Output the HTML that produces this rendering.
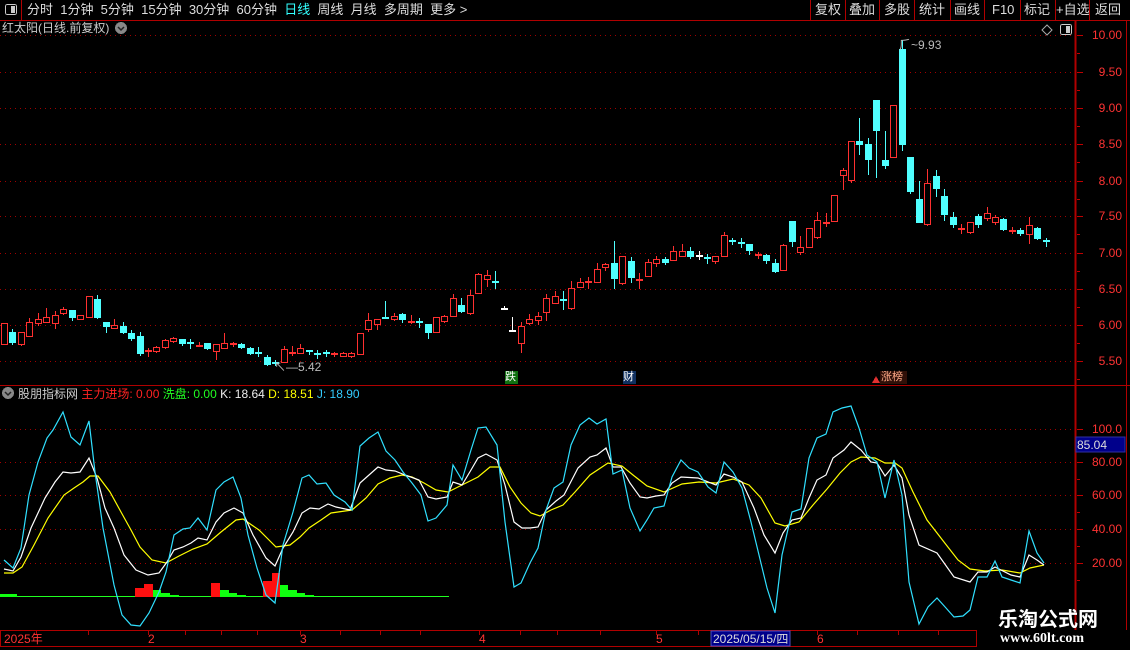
<!DOCTYPE html>
<html><head><meta charset="utf-8">
<style>
html,body{margin:0;padding:0;background:#000;width:1130px;height:650px;overflow:hidden}
body{position:relative;font-family:"Liberation Sans","Noto Sans CJK SC",sans-serif;}
.t{position:absolute;white-space:nowrap;font-size:12px;line-height:14px}
svg{position:absolute;left:0;top:0}
</style></head><body>
<svg id="s" width="1130" height="650" xmlns="http://www.w3.org/2000/svg" shape-rendering="crispEdges">
<line x1="0" y1="20.5" x2="1130" y2="20.5" stroke="#b00000"/>
<line x1="21.5" y1="0" x2="21.5" y2="20" stroke="#b00000"/>
<rect x="5.5" y="4.5" width="11" height="10" rx="2" fill="none" stroke="#ccc"/>
<rect x="11" y="6" width="4" height="7" fill="#ccc"/>
<g stroke="#b00000">
<line x1="810.5" y1="0" x2="810.5" y2="20"/><line x1="845.5" y1="0" x2="845.5" y2="20"/>
<line x1="879.5" y1="0" x2="879.5" y2="20"/><line x1="914.5" y1="0" x2="914.5" y2="20"/>
<line x1="950.5" y1="0" x2="950.5" y2="20"/><line x1="984.5" y1="0" x2="984.5" y2="20"/>
<line x1="1020.5" y1="0" x2="1020.5" y2="20"/><line x1="1055.5" y1="0" x2="1055.5" y2="20"/>
<line x1="1089.5" y1="0" x2="1089.5" y2="20"/>
</g>
<line x1="1075.5" y1="20" x2="1075.5" y2="630" stroke="#b00000" stroke-width="2"/>
<line x1="1126.5" y1="20" x2="1126.5" y2="630" stroke="#b00000" stroke-width="1"/>
<line x1="0" y1="385.5" x2="1130" y2="385.5" stroke="#b00000"/>
<g id="grid" stroke="#a00000" stroke-dasharray="1,4"></g>
<g id="ax" stroke="#c00000"></g>
<g id="c"></g>
<g id="bars"></g>
<g id="lines" fill="none" shape-rendering="auto"></g>
<rect x="0.5" y="630.5" width="976" height="16" fill="none" stroke="#b00000"/>
<g id="bt" stroke="#b00000"></g>
<rect x="711" y="631" width="79" height="15" fill="#00008b" stroke="#5050c0"/>
<rect x="1076" y="437" width="49" height="15" fill="#00008b" stroke="#3030a0"/>
<rect x="505" y="371" width="13" height="13" fill="#107010"/>
<rect x="623" y="371" width="13" height="13" fill="#103060"/>
<polygon points="872,383 876,376 880,383" fill="#e03030"/>
<rect x="880" y="371" width="27" height="13" fill="#301008"/>
<polygon points="1047,25 1052,30 1047,35 1042,30" fill="none" stroke="#aaa" shape-rendering="auto"/>
<rect x="1060.5" y="24.5" width="11" height="10" rx="2" fill="none" stroke="#ccc"/>
<rect x="1066" y="26" width="4" height="7" fill="#ccc"/>
<circle cx="121" cy="28" r="6" fill="#888"/><path d="M118 27 L121 30 L124 27" stroke="#222" stroke-width="1.5" fill="none" shape-rendering="auto"/>
<circle cx="8" cy="393" r="6" fill="#888"/><path d="M5 392 L8 395 L11 392" stroke="#222" stroke-width="1.5" fill="none" shape-rendering="auto"/>
</svg>

<div class="t" style="left:27px;top:3px;color:#ddd;font-size:13px">分时&nbsp; 1分钟&nbsp; 5分钟&nbsp; 15分钟&nbsp; 30分钟&nbsp; 60分钟&nbsp; <span style="color:#3ff">日线</span>&nbsp; 周线&nbsp; 月线&nbsp; 多周期&nbsp; 更多 &gt;</div>
<div class="t" style="left:815px;top:3px;color:#ddd;font-size:13px">复权</div>
<div class="t" style="left:849px;top:3px;color:#ddd;font-size:13px">叠加</div>
<div class="t" style="left:884px;top:3px;color:#ddd;font-size:13px">多股</div>
<div class="t" style="left:919px;top:3px;color:#ddd;font-size:13px">统计</div>
<div class="t" style="left:954px;top:3px;color:#ddd;font-size:13px">画线</div>
<div class="t" style="left:992px;top:3px;color:#ddd;font-size:13px">F10</div>
<div class="t" style="left:1024px;top:3px;color:#ddd;font-size:13px">标记</div>
<div class="t" style="left:1056px;top:3px;color:#ddd;font-size:13px">+自选</div>
<div class="t" style="left:1095px;top:3px;color:#ddd;font-size:13px">返回</div>
<div class="t" style="left:2px;top:21px;color:#ccc;font-size:12px">红太阳(日线.前复权)</div>
<div class="t" style="left:18px;top:387px;color:#ccc">股朋指标网 <span style="color:#f22">主力进场: 0.00</span> <span style="color:#2f2">洗盘: 0.00</span> <span style="color:#eee">K: 18.64</span> <span style="color:#ff0">D: 18.51</span> <span style="color:#3cf">J: 18.90</span></div>
<div class="t" style="left:274px;top:360px;color:#bbb">↖—5.42</div>
<div class="t" style="left:899px;top:38px;color:#bbb">⺁~9.93</div>
<div class="t" style="left:505px;top:371px;color:#fff;font-size:11px;line-height:13px">跌</div>
<div class="t" style="left:623px;top:371px;color:#fff;font-size:11px;line-height:13px">财</div>
<div class="t" style="left:881px;top:371px;color:#fa8;font-size:11px;line-height:13px">涨榜</div>
<div id="pl"></div>
<div class="t" style="left:1077px;top:438px;color:#ddd">85.04</div>
<div class="t" style="left:4px;top:632px;color:#f33">2025年</div>
<div class="t" style="left:148px;top:632px;color:#f33">2</div>
<div class="t" style="left:300px;top:632px;color:#f33">3</div>
<div class="t" style="left:479px;top:632px;color:#f33">4</div>
<div class="t" style="left:656px;top:632px;color:#f33">5</div>
<div class="t" style="left:713px;top:632px;color:#ddd">2025/05/15/四</div>
<div class="t" style="left:817px;top:632px;color:#f33">6</div>
<div class="t" style="left:998px;top:606px;color:#fff;font-size:20px;line-height:24px;font-weight:bold;font-family:'Noto Sans CJK SC',sans-serif">乐淘公式网</div>
<div class="t" style="left:1000px;top:631px;color:#fff;font-size:14px;line-height:16px;font-weight:bold;font-family:'Liberation Serif',serif">www.60lt.com</div>

<script>
var NS="http://www.w3.org/2000/svg";
function el(p,t,a){var e=document.createElementNS(NS,t);for(var k in a)e.setAttribute(k,a[k]);document.getElementById(p).appendChild(e);return e;}
[35,72,108,144,181,216,253,289,325,361].forEach(function(y){el("grid","line",{x1:0,y1:y+.5,x2:1074,y2:y+.5});});
[429,462,495,529,563].forEach(function(y){el("grid","line",{x1:0,y1:y+.5,x2:1074,y2:y+.5});});
var pl=document.getElementById("pl"),h="";
var pr=["10.00","9.50","9.00","8.50","8.00","7.50","7.00","6.50","6.00","5.50"],py=[35,72,108,144,181,216,253,289,325,361];
pr.forEach(function(v,i){h+='<div class="t" style="left:1090px;top:'+(py[i]-7)+'px;color:#f33;width:32px;text-align:right">'+v+'</div>';
el("ax","line",{x1:1077,y1:py[i]+.5,x2:1083,y2:py[i]+.5});el("ax","line",{x1:1077,y1:py[i]+18.5,x2:1080,y2:py[i]+18.5});});
var iv=["100.0","80.00","60.00","40.00","20.00"],iy=[429,462,495,529,563];
iv.forEach(function(v,i){h+='<div class="t" style="left:1090px;top:'+(iy[i]-7)+'px;color:#f33;width:32px;text-align:right">'+v+'</div>';
el("ax","line",{x1:1077,y1:iy[i]+.5,x2:1083,y2:iy[i]+.5});el("ax","line",{x1:1077,y1:iy[i]+17.5,x2:1080,y2:iy[i]+17.5});});
pl.innerHTML=h;
[36,88,148,185,221,257,300,340,380,420,479,520,557,600,656,698,745,776,817,857,898,938].forEach(function(x){el("bt","line",{x1:x+.5,y1:631,x2:x+.5,y2:635});});
var d=[["r",323,344,323,344],["c",332,342,329,344],["r",332,344,332,345],["r",322,336,318,336],["r",319,323,313,325],["r",317,322,308,322],["r",315,323,311,328],["r",309,313,307,314],["c",310,317,310,320],["r",315,319,315,319],["r",296,317,296,317],["c",299,317,295,318],["c",322,326,322,332],["r",325,328,319,328],["c",326,332,322,333],["c",333,338,330,340],["c",336,353,332,355],["r",350,351,348,356],["r",347,351,346,352],["r",340,347,339,348],["r",338,341,337,342],["c",339,343,339,345],["c",342,343,339,348],["r",345,346,342,346],["c",343,348,343,349],["r",344,351,344,359],["r",343,348,333,348],["r",343,345,342,346],["c",344,347,343,348],["c",348,353,347,354],["c",352,353,347,356],["c",357,364,355,365],["c",362,363,360,365],["r",349,362,346,362],["r",352,353,346,355],["r",348,353,344,353],["c",350,352,350,354],["c",353,354,350,358],["c",352,353,350,356],["r",353,355,352,356],["r",353,356,352,356],["r",353,356,352,357],["r",333,354,333,354],["r",320,329,313,331],["r",319,324,319,329],["c",317,318,301,318],["r",316,319,313,320],["c",314,319,313,322],["r",321,322,315,323],["c",321,322,318,327],["c",324,332,324,338],["r",317,332,317,332],["r",316,321,315,322],["r",298,316,294,316],["c",305,311,298,312],["r",295,313,290,314],["r",274,293,273,293],["r",275,279,270,286],["c",281,283,271,288],["w",308,309,306,309],["w",330,331,317,331],["r",326,343,322,352],["r",319,323,314,324],["r",316,320,312,324],["r",298,312,294,320],["r",296,303,291,303],["c",299,300,291,309],["r",288,308,281,309],["r",282,287,278,287],["r",281,282,277,288],["r",269,282,263,282],["r",264,267,263,270],["c",263,278,241,288],["r",256,283,256,284],["c",261,277,257,282],["r",279,280,273,288],["r",262,276,259,276],["r",259,263,256,266],["c",259,262,257,264],["r",251,260,246,260],["r",251,256,244,256],["c",251,256,247,258],["w",255,256,251,259],["c",257,258,254,263],["r",256,261,256,263],["r",235,256,232,256],["c",240,241,238,244],["c",242,243,238,247],["c",244,250,244,254],["r",254,256,252,258],["c",255,260,254,263],["c",263,271,259,272],["r",245,270,244,270],["c",221,241,221,246],["r",247,252,236,254],["r",228,247,228,247],["r",220,237,212,238],["r",222,223,213,226],["r",195,221,195,221],["r",170,175,168,189],["r",141,180,141,182],["c",141,144,118,154],["c",144,159,138,174],["c",100,130,100,177],["c",160,165,131,168],["r",105,157,105,157],["c",49,144,40,150],["c",157,191,157,193],["c",199,222,181,222],["r",183,224,169,225],["c",176,188,170,196],["c",196,214,189,220],["c",217,224,212,227],["r",228,229,224,233],["r",222,232,222,233],["c",216,224,214,227],["r",213,218,207,220],["r",217,222,215,224],["c",219,229,218,230],["r",230,231,227,233],["c",230,233,228,235],["r",225,234,217,243],["c",228,238,227,239],["c",240,241,238,246]];
d.forEach(function(c,i){var x=Math.round(4+i*8.47);var col=c[0]=="r"?"#ff3030":c[0]=="c"?"#50ffff":"#ffffff";
var t=c[1],b=c[2];
el("c","line",{x1:x+.5,y1:c[3],x2:x+.5,y2:c[4]+1,stroke:col});
if(b-t<=2){el("c","rect",{x:x-3,y:t,width:7,height:2,fill:col});}
else if(c[0]=="r"){el("c","rect",{x:x-2.5,y:t+.5,width:6,height:b-t,fill:"#000",stroke:col});}
else{el("c","rect",{x:x-3,y:t,width:7,height:b-t+1,fill:col});}
});
el("bars","line",{x1:0,y1:596.5,x2:449,y2:596.5,stroke:"#20ff20"});
[["r",135,144,588],["r",144,153,584],["g",153,161,590],["g",161,170,593],["g",170,179,595],["g",0,17,594],["r",211,220,583],["g",220,229,590],["g",229,237,593],["g",237,246,595],["r",263,272,581],["r",272,280,573],["g",280,288,585],["g",288,297,590],["g",297,305,593],["g",305,314,595]].forEach(function(b){
el("bars","rect",{x:b[1],y:b[3],width:b[2]-b[1],height:597-b[3],fill:b[0]=="r"?"#ff1010":"#10ff10"});});
function pl2(pts,col){el("lines","polyline",{points:pts.map(function(p){return p.join(",")}).join(" "),stroke:col,"stroke-width":1.2});}
var J=[[4,560],[13,568],[21,548],[29,495],[38,462],[47,438],[53,430],[63,412],[71,437],[80,445],[89,421],[95,472],[103,528],[114,585],[122,615],[131,625],[140,626],[149,613],[159,592],[166,572],[174,535],[183,529],[190,528],[198,518],[207,530],[216,490],[224,482],[233,477],[241,498],[248,535],[257,568],[266,595],[275,603],[283,545],[293,512],[302,478],[309,475],[317,484],[326,483],[334,495],[345,502],[352,510],[360,446],[369,438],[378,432],[386,451],[395,460],[403,472],[412,483],[421,495],[428,521],[436,518],[447,505],[453,465],[462,480],[471,450],[478,428],[486,427],[497,445],[505,522],[514,587],[521,583],[530,563],[538,548],[546,510],[554,488],[563,482],[571,445],[580,425],[589,418],[597,424],[606,419],[613,474],[622,470],[630,508],[640,531],[647,520],[654,508],[664,506],[672,477],[681,460],[689,468],[698,472],[708,487],[716,493],[724,462],[733,472],[742,488],[751,522],[759,555],[767,588],[775,613],[782,555],[792,512],[801,509],[809,458],[817,438],[826,434],[833,412],[842,408],[851,406],[859,428],[867,455],[877,462],[885,498],[894,460],[902,495],[909,582],[919,624],[928,607],[937,598],[946,608],[954,617],[963,616],[970,610],[978,577],[987,577],[995,561],[1002,577],[1011,580],[1020,583],[1029,531],[1037,553],[1044,563]];
var K=[[4,569],[13,571],[21,557],[31,528],[45,498],[55,482],[63,472],[71,473],[80,472],[89,458],[97,478],[105,508],[114,528],[124,555],[136,570],[148,575],[159,573],[167,562],[174,550],[183,547],[191,543],[198,538],[207,540],[216,522],[224,513],[234,508],[243,513],[253,535],[266,558],[275,566],[283,548],[293,532],[302,513],[310,508],[319,509],[328,504],[336,507],[350,510],[360,483],[369,475],[378,467],[386,470],[395,471],[405,475],[419,480],[428,497],[436,499],[447,497],[453,482],[462,485],[471,470],[478,458],[486,454],[497,460],[505,485],[514,522],[522,528],[530,528],[538,527],[546,510],[556,501],[564,495],[578,468],[590,457],[597,455],[606,448],[613,467],[621,467],[630,483],[640,497],[647,498],[656,496],[664,495],[672,483],[681,477],[698,478],[716,485],[724,474],[733,477],[742,482],[754,508],[764,535],[775,553],[783,533],[792,520],[801,518],[809,498],[817,480],[826,475],[833,458],[844,450],[851,442],[861,450],[871,462],[877,463],[885,476],[894,465],[902,478],[909,515],[919,545],[937,553],[954,577],[970,582],[978,572],[987,572],[995,567],[1011,575],[1020,577],[1029,555],[1037,560],[1044,565]];
var D=[[4,573],[13,573],[22,567],[34,545],[48,518],[64,495],[74,488],[83,482],[90,476],[98,476],[110,492],[121,512],[131,530],[140,547],[152,560],[166,563],[179,556],[193,549],[207,544],[221,532],[236,520],[243,519],[259,530],[267,538],[276,547],[290,545],[300,537],[309,528],[321,520],[331,513],[345,511],[352,510],[366,498],[378,484],[390,478],[402,475],[412,477],[424,483],[436,490],[448,492],[462,485],[478,477],[490,467],[500,467],[510,487],[521,503],[531,513],[540,516],[551,510],[563,505],[575,492],[590,475],[608,463],[622,466],[633,475],[647,486],[664,492],[682,484],[699,482],[716,483],[733,479],[749,485],[761,498],[775,523],[785,526],[799,522],[813,505],[827,489],[840,473],[851,462],[861,457],[875,458],[885,463],[895,463],[902,468],[913,492],[927,520],[944,542],[958,560],[970,569],[985,571],[1002,570],[1020,573],[1030,568],[1044,565]];
pl2(D,"#ffff00");pl2(K,"#ffffff");pl2(J,"#30e0ff");
</script>
</body></html>
